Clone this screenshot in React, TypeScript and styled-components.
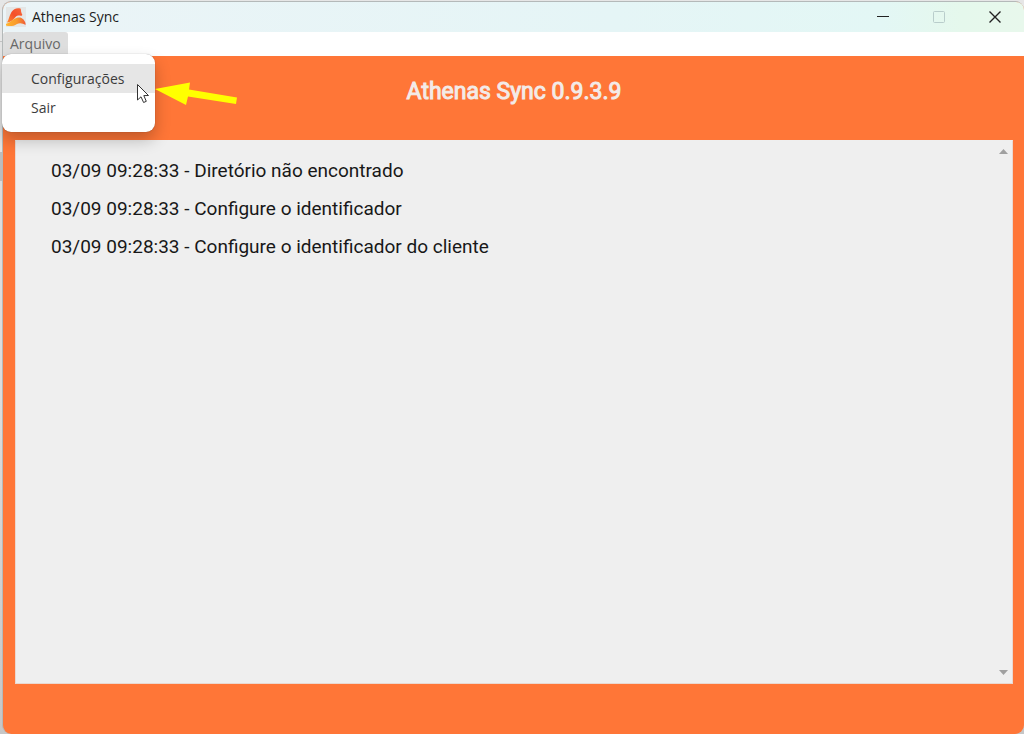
import React from "react";
import styled, { createGlobalStyle } from "styled-components";

const GlobalStyle = createGlobalStyle`
  * { box-sizing: border-box; }
  body {
    margin: 0;
    font-family: Roboto, "Liberation Sans", sans-serif;
    background: linear-gradient(#e6e6e6 0 41px, #c2c2c2 41px 42px, #e3e3e3 42px 152px, #bcbcbc 152px 181px, #dcdcdc 181px 400px, #c6c6c6);
  }
`;

const Desktop = styled.div`
  display: flex;
  min-height: 100vh;
  padding: 1px 0 0 2px;
`;

const Window = styled.div`
  position: relative;
  flex: 1;
  display: flex;
  flex-direction: column;
  border: 1px solid #b4b9b9;
  border-width: 1px 0 0 1px;
  border-radius: 9px;
  background: #ff7637;
`;

const TitleBar = styled.header`
  display: flex;
  align-items: center;
  height: 30px;
  padding: 0 1px 0 3px;
  border-radius: 8px 8px 0 0;
  background: linear-gradient(90deg, #ebf4f7, #e5f5f6 60%, #e3f7f5 86%, #e5f8ec 94%, #e8f8ec);
`;

const AppName = styled.span`
  flex: 1;
  margin-left: 6px;
  font: 14px/20px "Open Sans", "Noto Sans", sans-serif;
  color: #1c1c1c;
`;

const WindowButton = styled.button`
  display: grid;
  place-items: center;
  width: 56px;
  height: 30px;
  padding: 0;
  border: 0;
  background: none;
  color: #222;
  &:disabled { color: #b9cdcb; }
`;

const MenuBar = styled.nav`
  height: 24px;
  background: #fff;
`;

const MenuTitle = styled.button`
  height: 24px;
  padding: 0 7px;
  border: 0;
  border-radius: 3px 3px 0 0;
  background: #dedede;
  font: 14px/24px "Open Sans", "Noto Sans", sans-serif;
  color: #686868;
`;

const Menu = styled.div`
  position: absolute;
  top: 52px;
  left: -1px;
  z-index: 1;
  width: 153px;
  padding: 10px 0;
  border-radius: 9px;
  background: #fff;
  box-shadow: 0 0 1px rgba(0, 0, 0, 0.4), 0 8px 16px rgba(0, 0, 0, 0.24);
`;

const MenuItem = styled.button<{ $active?: boolean }>`
  display: block;
  width: 100%;
  height: 29px;
  padding: 0 0 0 29px;
  border: 0;
  background: ${(p) => (p.$active ? "#e6e6e6" : "transparent")};
  font: 14px/29px "Open Sans", "Noto Sans", sans-serif;
  text-align: left;
  color: #3c3c3c;
`;

const Pointer = styled.svg`
  position: absolute;
  top: 80px;
  left: 133px;
  z-index: 2;
  pointer-events: none;
`;

const Content = styled.main`
  flex: 1;
  display: flex;
  flex-direction: column;
  padding: 0 11px 50px 12px;
`;

const Heading = styled.h1`
  margin: 0;
  height: 84px;
  padding-top: 20px;
  font-size: 23px;
  line-height: 32px;
  font-weight: 400;
  -webkit-text-stroke: 1px #f3ebe8;
  text-align: center;
  color: #f3ebe8;
`;

const LogPanel = styled.section`
  flex: 1;
  display: flex;
  border: 1px solid #ead8d0;
  border-top-color: #efefef;
  background: #efefef;
`;

const LogList = styled.ul`
  flex: 1;
  margin: 0;
  padding: 11px 0 0 35px;
  list-style: none;
`;

const LogLine = styled.li`
  font-size: 19px;
  line-height: 38px;
  color: #181818;
`;

const ScrollTrack = styled.div`
  display: flex;
  flex-direction: column;
  justify-content: space-between;
  width: 17px;
  padding: 2px 0 3px;
`;

const ScrollButton = styled.button`
  display: grid;
  place-items: center;
  width: 17px;
  height: 16px;
  padding: 0;
  border: 0;
  background: none;
`;

const Logo = () => (
  <svg width="20" height="20" viewBox="0 0 20 20" aria-hidden="true">
    <defs>
      <linearGradient id="peak" x1="0" y1="1" x2="1" y2="0">
        <stop offset="0" stopColor="#ff8a2b" />
        <stop offset="0.5" stopColor="#f4502a" />
        <stop offset="1" stopColor="#f8683a" />
      </linearGradient>
      <linearGradient id="wave" x1="0" y1="0" x2="1" y2="0">
        <stop offset="0" stopColor="#ffb52e" />
        <stop offset="0.55" stopColor="#f99a2c" />
        <stop offset="1" stopColor="#ef5b36" />
      </linearGradient>
    </defs>
    <path d="M0 0H20V20H0Z" fill="#e4e6e6" />
    <path d="M1 15.500C3 13 3 9 5.500 5C7.500 2 10.500 .5 14.500 1.500C15 2.500 15 3.500 15.200 5C15.500 7 17 7.500 16 8.500C14.500 9.500 12 7.500 10 9.500C7.500 12 6 15 1 15.500Z" fill="url(#peak)" />
    <path d="M0 17C3 16 5 14 8 12C11 10 15 9.500 17.500 12.500C18.500 14 20 15.500 19.500 18C17 16.500 14 15.500 11 17C7.500 19.500 3 19.500 0 18.500Z" fill="url(#wave)" />
  </svg>
);

const entries = [
  "03/09 09:28:33 - Diretório não encontrado",
  "03/09 09:28:33 - Configure o identificador",
  "03/09 09:28:33 - Configure o identificador do cliente",
];

export default function App() {
  return (
    <>
      <GlobalStyle />
      <Desktop>
        <Window>
          <TitleBar>
            <Logo />
            <AppName>Athenas Sync</AppName>
            <WindowButton aria-label="Minimizar">
              <svg width="12" height="12"><path d="M0 5H12V6H0Z" fill="currentColor" /></svg>
            </WindowButton>
            <WindowButton aria-label="Maximizar" disabled>
              <svg width="12" height="12" fill="none" stroke="currentColor"><rect x=".5" y=".5" width="11" height="11" rx="1" /></svg>
            </WindowButton>
            <WindowButton aria-label="Fechar">
              <svg width="12" height="12" fill="none" stroke="currentColor" strokeWidth="1.400"><path d="M.5 .5L11.500 11.500M11.500 .5L.5 11.500" /></svg>
            </WindowButton>
          </TitleBar>
          <MenuBar>
            <MenuTitle aria-haspopup="menu" aria-expanded="true">Arquivo</MenuTitle>
          </MenuBar>
          <Menu role="menu">
            <MenuItem role="menuitem" $active>Configurações</MenuItem>
            <MenuItem role="menuitem">Sair</MenuItem>
          </Menu>
          <Pointer width="104" height="26" viewBox="0 0 104 26" aria-hidden="true">
            <path d="M19 7L54 0.500L53 7.500L101 15.500L100 22L52 14.500L50 23Z" fill="#ffff00" />
            <path d="M1.500 2.500V18L5 14.800L7.600 20.500L10.300 19.300L7.800 13.600L12.500 13.500Z" fill="#fff" stroke="#333" strokeWidth="1" />
          </Pointer>
          <Content>
            <Heading>Athenas Sync 0.9.3.9</Heading>
            <LogPanel aria-label="Registro">
              <LogList>
                {entries.map((entry) => (
                  <LogLine key={entry}>{entry}</LogLine>
                ))}
              </LogList>
              <ScrollTrack>
                <ScrollButton aria-label="Rolar para cima">
                  <svg width="9" height="5"><path d="M0 5L4.500 0L9 5Z" fill="#a0a0a0" /></svg>
                </ScrollButton>
                <ScrollButton aria-label="Rolar para baixo">
                  <svg width="9" height="5"><path d="M0 0L4.500 5L9 0Z" fill="#a0a0a0" /></svg>
                </ScrollButton>
              </ScrollTrack>
            </LogPanel>
          </Content>
        </Window>
      </Desktop>
    </>
  );
}
